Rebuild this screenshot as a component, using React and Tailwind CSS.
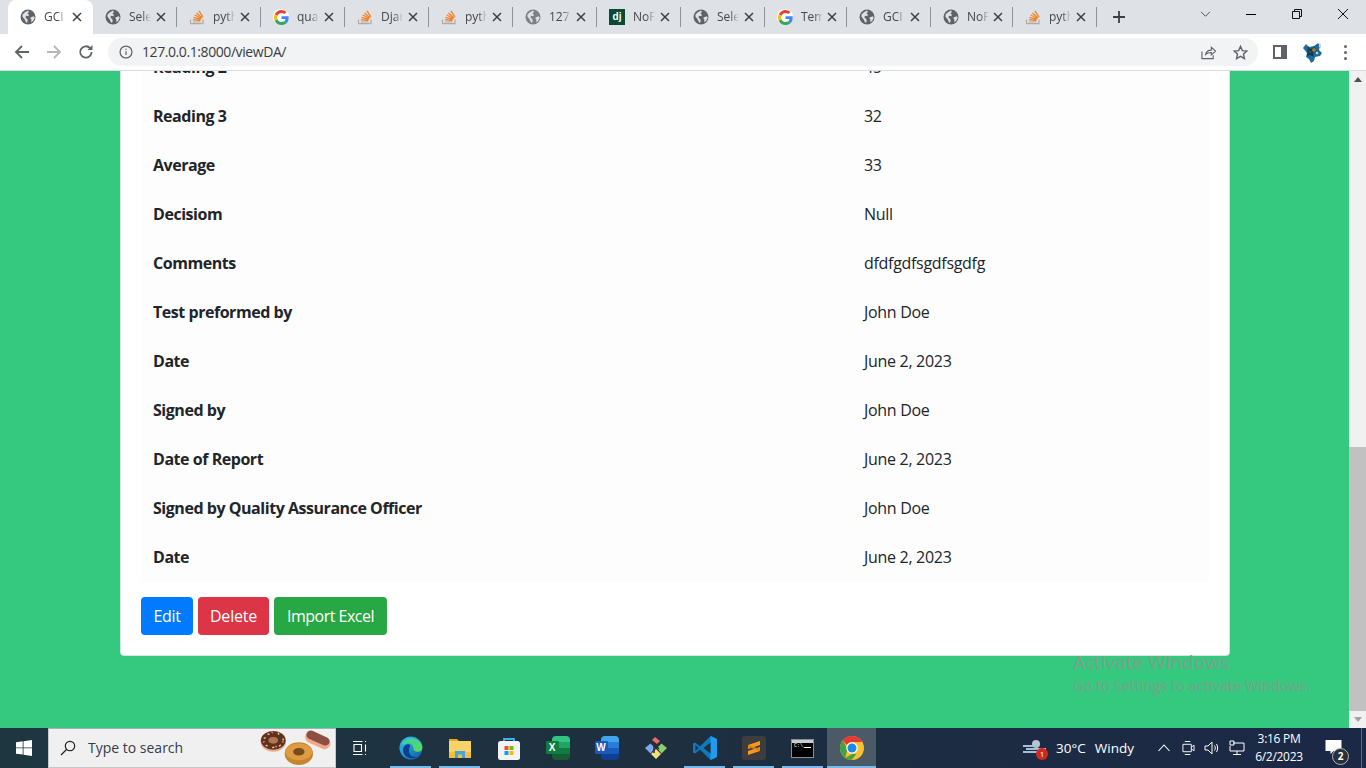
import React from "react";

const sans = "font-['Open_Sans','Noto_Sans',sans-serif]";

function Globe({ c = "#5f6368" }) {
  return (
    <svg viewBox="0 0 16 16" className="w-4 h-4 shrink-0">
      <circle cx="8" cy="8" r="7.5" fill={c} />
      <path d="M2.5 5.5 5 3.2l3-1.6 1 1.4-1.6 1.3 1.5 1.4-.6 1.6-2.4-.5-.4 1.7 2 2 .1 2.6-1.5.7-1.2-3-2.4-3z M11 8.2l2.9-.9.8 1.4-1.6 3.4-1.9 1.2.2-2.7-1.2-1.5z" fill="#dee1e6" />
    </svg>
  );
}

function SO() {
  return (
    <svg viewBox="0 0 16 16" className="w-4 h-4 shrink-0" fill="none">
      <path d="M1.5 10.5v4.2h12.5v-4.2" stroke="#b3a99e" strokeWidth="1.2" />
      <path d="M3.8 12.9h7.6" stroke="#bcbbbb" strokeWidth="1.3" />
      <path d="M3.9 10.7l7.5.8M4.5 8.4l7.3 2M5.7 6l6.6 3.5M7.5 3.9l5.6 5M9.9 1.9l4 6" stroke="#f48024" strokeWidth="1.3" />
    </svg>
  );
}

function G() {
  return (
    <span className="w-4 h-4 shrink-0 rounded-full bg-white flex items-center justify-center">
      <svg viewBox="0 0 48 48" className="w-[15px] h-[15px]">
        <path fill="#EA4335" d="M24 9.5c3.5 0 6.7 1.2 9.2 3.6l6.9-6.9C35.9 2.4 30.5 0 24 0 14.6 0 6.5 5.4 2.6 13.2l8 6.2C12.4 13.7 17.7 9.5 24 9.5z" />
        <path fill="#4285F4" d="M47 24.5c0-1.6-.1-3.1-.4-4.5H24v9h12.9c-.6 3-2.2 5.5-4.7 7.2l7.7 6C44.400 38 47 31.800 47 24.500z" />
        <path fill="#FBBC05" d="M10.500 28.600c-.5-1.400-.8-3-.8-4.600s.3-3.200.8-4.600l-8-6.200C.9 16.500 0 20.100 0 24s.9 7.500 2.600 10.800z" />
        <path fill="#34A853" d="M24 48c6.500 0 11.900-2.100 15.900-5.800l-7.700-6c-2.200 1.500-5 2.300-8.200 2.300-6.300 0-11.600-4.200-13.500-9.900l-8 6.200C6.500 42.600 14.600 48 24 48z" />
      </svg>
    </span>
  );
}

function Dj() {
  return (
    <span className="w-4 h-4 shrink-0 bg-[#0c4b33] text-white text-[10px] leading-4 font-bold text-center font-['Liberation_Sans',sans-serif]">dj</span>
  );
}

function ChromeLogo({ size = 24 }) {
  return (
    <svg viewBox="0 0 48 48" width={size} height={size}>
      <circle cx="24" cy="24" r="24" fill="#fbc02d" />
      <path d="M24 0a24 24 0 0 1 20.800 12H24a12 12 0 0 0-10.400 6L5.300 8.800A24 24 0 0 1 24 0z" fill="#e53935" />
      <path d="M5.300 8.800 15 26l-4.600 17.800A24 24 0 0 1 5.300 8.800zM10.400 43.800 24 36l9 0-10 12a24 24 0 0 1-12.600-4.200z" fill="#43a047" />
      <circle cx="24" cy="24" r="11.500" fill="#fff" />
      <circle cx="24" cy="24" r="9" fill="#1e88e5" />
    </svg>
  );
}

const tabs = [
  { t: "GCI", i: <Globe />, active: true },
  { t: "Sele", i: <Globe /> },
  { t: "pyth", i: <SO /> },
  { t: "qua", i: <G /> },
  { t: "Djar", i: <SO /> },
  { t: "pyth", i: <SO /> },
  { t: "127.", i: <Globe c="#7d8185" /> },
  { t: "NoF", i: <Dj /> },
  { t: "Sele", i: <Globe /> },
  { t: "Tem", i: <G />, narrow: true },
  { t: "GCI", i: <Globe /> },
  { t: "NoF", i: <Globe />, narrow: true },
  { t: "pyth", i: <SO /> },
];

function Close() {
  return (
    <svg viewBox="0 0 10 10" className="w-[10px] h-[10px] shrink-0" fill="none" stroke="#3c4043" strokeWidth="1.5">
      <path d="M1 1l8 8M9 1l-8 8" />
    </svg>
  );
}

function Tab({ t, i, active, noSep, narrow }) {
  const box = active
    ? "w-[85px] bg-white rounded-t-lg pl-3 pr-[11px]"
    : narrow
    ? "w-[82px] pl-3 pr-[10px]"
    : "w-[84px] pl-3 pr-[11px]";
  return (
    <div className={`relative h-[34px] flex items-center shrink-0 ${box}`}>
      {i}
      <span className="ml-2 w-[22px] overflow-hidden whitespace-nowrap text-xs text-[#45474a] [mask-image:linear-gradient(to_right,black_60%,transparent)]">{t}</span>
      <span className="ml-auto"><Close /></span>
      {!active && !noSep && <span className="absolute right-0 top-[7px] h-[20px] w-px bg-[#8f9296]" />}
    </div>
  );
}

function TabStrip() {
  return (
    <div className={`h-[34px] bg-[#dee1e6] flex items-end pl-2 ${sans}`}>
      {tabs.map((x, k) => <Tab key={k} {...x} noSep={k === 0} />)}
      <svg viewBox="0 0 12 12" className="w-3 h-3 ml-4 mb-[11px] shrink-0" fill="none" stroke="#3c4043" strokeWidth="1.800"><path d="M6 0v12M0 6h12" /></svg>
      <div className="ml-auto flex items-start h-full pt-2">
        <span className="w-[46px] flex justify-center"><svg viewBox="0 0 12 8" className="w-[11px] h-[7px] mt-[3px]" fill="none" stroke="#3c4043" strokeWidth="1"><path d="M1 1l5 5 5-5" /></svg></span>
        <span className="w-[46px] flex justify-center"><span className="w-[10px] h-px bg-black mt-[6px]" /></span>
        <span className="w-[46px] flex justify-center"><svg viewBox="0 0 10 10" className="w-[10px] h-[10px] mt-px" fill="none" stroke="#111" strokeWidth="1"><path d="M.5 2.500h7v7h-7zM2.500 2.500v-2h7v7h-2" /></svg></span>
        <span className="w-[46px] flex justify-center"><svg viewBox="0 0 10 10" className="w-[10px] h-[10px] mt-px" fill="none" stroke="#111" strokeWidth="1"><path d="M0 0l10 10M10 0L0 10" /></svg></span>
      </div>
    </div>
  );
}

function Toolbar() {
  return (
    <div className={`h-[37px] bg-white border-b border-[#dadce0] flex items-start pt-[4px] ${sans}`}>
      <div className="w-[108px] h-[28px] flex items-center shrink-0">
        <svg viewBox="0 0 16 16" className="w-4 h-4 ml-[14px]" fill="none" stroke="#5f6368" strokeWidth="1.800"><path d="M15 8H2M8 2 2 8l6 6" /></svg>
        <svg viewBox="0 0 16 16" className="w-4 h-4 ml-4" fill="none" stroke="#b4b6b9" strokeWidth="1.800"><path d="M1 8h13M8 2l6 6-6 6" /></svg>
        <svg viewBox="0 0 16 16" className="w-4 h-4 ml-4" fill="none" stroke="#5f6368" strokeWidth="1.800"><path d="M13.600 8a5.700 5.700 0 1 1-1.500-3.900" /><path d="M14.500 1v5h-5z" fill="#5f6368" stroke="none" /></svg>
      </div>
      <div className="w-[1150px] h-[28px] bg-[#f1f3f4] rounded-full flex items-center shrink-0">
        <svg viewBox="0 0 16 16" className="w-[14px] h-[14px] ml-[11px] shrink-0" fill="none" stroke="#5f6368" strokeWidth="1.400"><circle cx="8" cy="8" r="6.800" /><path d="M8 7v4.500M8 4.200v1.600" /></svg>
        <span className="ml-[9px] text-sm text-[#3a3d41] tracking-[-0.42px]">127.0.0.1:8000/viewDA/</span>
        <svg viewBox="0 0 16 16" className="w-[15px] h-[15px] ml-auto" fill="none" stroke="#5f6368" strokeWidth="1.200"><path d="M1 7v7.500h12V11" /><path d="M5 10c.5-3 3-4.600 6-4.600V2.500l4.500 4-4.500 4V8C8.500 8 6.500 8.500 5 10z" /></svg>
        <svg viewBox="0 0 16 16" className="w-[15px] h-[15px] ml-[17px] mr-[10px]" fill="none" stroke="#5f6368" strokeWidth="1.500"><path d="M8 1.500 10 6l4.700.5-3.500 3.200 1 4.800L8 12.100l-4.200 2.400 1-4.800L1.300 6.500 6 6z" /></svg>
      </div>
      <div className="flex items-center h-[28px] flex-1 min-w-0">
        <span className="ml-[15px] w-[14px] h-[14px] border-2 border-[#5f6368] border-r-[6px] shrink-0" />
        <svg viewBox="0 0 22 22" className="w-[22px] h-[22px] ml-[15px] shrink-0">
          <path d="M1 7l3-4 3 3 5-1 4-3 2 3-1 4 3 3-2 3-5 1-1 4-3 2-2-4-3-2 1-4z" fill="#1f6d9c" />
          <path d="M6 5l2 3 5-2 2 4-4 2 1 4-4-2-3 1z" fill="#0c3c5c" />
          <circle cx="12" cy="9" r="2" fill="#a8772e" /><circle cx="8" cy="11" r="1.500" fill="#5b4a1f" /><circle cx="15" cy="12" r="1.200" fill="#d0d4d6" /><path d="M17 2l2 1 0 4-2-1z" fill="#cfd3d5" />
        </svg>
        <span className="ml-[20px] flex flex-col gap-[3px] shrink-0">
          <i className="w-[3px] h-[3px] rounded-full bg-[#5f6368]" /><i className="w-[3px] h-[3px] rounded-full bg-[#5f6368]" /><i className="w-[3px] h-[3px] rounded-full bg-[#5f6368]" />
        </span>
      </div>
    </div>
  );
}

const rows = [
  ["Reading 2", "45"],
  ["Reading 3", "32"],
  ["Average", "33"],
  ["Decisiom", "Null"],
  ["Comments", "dfdfgdfsgdfsgdfg"],
  ["Test preformed by", "John Doe"],
  ["Date", "June 2, 2023"],
  ["Signed by", "John Doe"],
  ["Date of Report", "June 2, 2023"],
  ["Signed by Quality Assurance Officer", "John Doe"],
  ["Date", "June 2, 2023"],
];

function Page() {
  return (
    <div className={`relative flex-1 min-h-0 flex bg-[#34c97e] overflow-hidden ${sans}`}>
      <div className="flex-1 min-w-0 pl-[120px]">
        <div className="-mt-[29px] w-[1110px] h-[614px] bg-white rounded border border-[#d9e4de] px-5 text-[#212529]">
          <table className="w-[1068px] border-collapse text-base">
            <tbody>
              {rows.map(([a, b], k) => (
                <tr key={k} className="h-[49px] bg-[#fdfdfd]">
                  <th className="w-[711px] px-3 pb-[2px] text-left font-bold tracking-[-0.46px]">{a}</th>
                  <td className="px-3 pb-[2px] tracking-[-0.3px]">{b}</td>
                </tr>
              ))}
            </tbody>
          </table>
          <div className="flex gap-[5px] mt-[15px] text-white">
            <button className="h-[38px] w-[52px] rounded bg-[#007bff] tracking-[-0.3px]">Edit</button>
            <button className="h-[38px] w-[71px] rounded bg-[#dc3545] tracking-[-0.2px]">Delete</button>
            <button className="h-[38px] w-[113px] rounded bg-[#28a745] tracking-[-0.5px] whitespace-nowrap">Import Excel</button>
          </div>
        </div>
      </div>
      <div className="w-[17px] bg-[#f1f1f1] flex flex-col items-center shrink-0">
        <div className="h-[17px] flex items-center justify-center"><span className="w-0 h-0 border-x-[4px] border-x-transparent border-b-[5px] border-b-[#505050]" /></div>
        <div className="flex-1" />
        <div className="w-full h-[264px] bg-[#c1c1c1]" />
        <div className="h-[17px] flex items-center justify-center"><span className="w-0 h-0 border-x-[4px] border-x-transparent border-t-[5px] border-t-[#a3a3a3]" /></div>
      </div>
      <div className="absolute left-[1073px] top-[579px] text-[#7a9f8d] pointer-events-none whitespace-nowrap">
        <div className="text-[19px] leading-6">Activate Windows</div>
        <div className="text-[14.500px] leading-5 mt-[2px]">Go to Settings to activate Windows.</div>
      </div>
    </div>
  );
}

const Edge = () => (
  <svg viewBox="0 0 24 24" className="w-6 h-6">
    <defs>
      <linearGradient id="e1" x1="0" y1="0" x2="1" y2="1"><stop offset="0" stopColor="#35c1f1" /><stop offset="1" stopColor="#0c59a4" /></linearGradient>
      <linearGradient id="e2" x1="0" y1="0" x2="1" y2="1"><stop offset="0" stopColor="#35d0b0" /><stop offset="1" stopColor="#5fd84f" /></linearGradient>
    </defs>
    <circle cx="12" cy="12" r="11.500" fill="url(#e1)" />
    <path d="M3 8C6 1 18 0 22.500 8c1.500 3 1 7-2 7.500-3 .5-6 0-6-2.500 0-4-3-6-6-5.500S3.500 9.500 3 8z" fill="url(#e2)" />
    <path d="M8 8.500c-4 1-5 6-2.500 10 2.500 4 9 5 12.500 2.500-5 1-8.500-3-8-7 .2-2 1-3.500 1-5-.7-.8-2-.8-3-.5z" fill="#0d3f8e" />
  </svg>
);
const Folder = () => (
  <svg viewBox="0 0 22 20" className="w-[22px] h-5">
    <path d="M0 1h8l2 2v4H0z" fill="#e6a823" />
    <path d="M0 3h22v17H0z" fill="#f8d468" />
    <path d="M0 14h22v6H0z" fill="#f0bf3e" />
    <path d="M6 13h10v7h-3v-3.500H9V20H6z" fill="#4aa3e0" />
  </svg>
);
const Store = () => (
  <svg viewBox="0 0 24 24" className="w-6 h-6">
    <path d="M7 7V3h10v4" fill="none" stroke="#3cb4ea" strokeWidth="1.800" />
    <rect x="1" y="5" width="22" height="19" rx="2.500" fill="#f3f3f3" />
    <rect x="7.500" y="10" width="4" height="4" fill="#f25022" /><rect x="12.500" y="10" width="4" height="4" fill="#7fba00" />
    <rect x="7.500" y="15" width="4" height="4" fill="#00a4ef" /><rect x="12.500" y="15" width="4" height="4" fill="#ffb900" />
  </svg>
);
const Excel = () => (
  <div className="relative w-6 h-6">
    <div className="absolute left-[6px] top-0 w-[18px] h-6 rounded-sm flex flex-col overflow-hidden">
      <i className="flex-1 bg-[#33c481]" /><i className="flex-1 bg-[#21a366]" /><i className="flex-1 bg-[#107c41]" /><i className="flex-1 bg-[#185c37]" />
    </div>
    <span className="absolute left-0 top-[5px] w-[13px] h-[13px] bg-[#107c41] text-white text-[10px] leading-[13px] text-center font-bold rounded-[1px] font-['Liberation_Sans',sans-serif]">X</span>
  </div>
);
const Word = () => (
  <div className="relative w-6 h-6">
    <div className="absolute left-[6px] top-0 w-[18px] h-6 rounded-sm flex flex-col overflow-hidden">
      <i className="flex-1 bg-[#41a5ee]" /><i className="flex-1 bg-[#2b7cd3]" /><i className="flex-1 bg-[#185abd]" /><i className="flex-1 bg-[#103f91]" />
    </div>
    <span className="absolute left-0 top-[5px] w-[13px] h-[13px] bg-[#185abd] text-white text-[10px] leading-[13px] text-center font-bold rounded-[1px] font-['Liberation_Sans',sans-serif]">W</span>
  </div>
);
const Git = () => (
  <svg viewBox="0 0 24 24" className="w-6 h-6">
    <path d="M11 12 6.500 7.500 1 12l5.500 5.500z" fill="#7fa8f0" />
    <path d="M13 12l4.500-4.500L23 12l-5.500 5.500z" fill="#8ccf66" />
    <path d="M12 13l-5 5 5 5 5-5z" fill="#f5e17a" />
    <path d="M8 4l3-3 5 4-3 3z" fill="#e96a6a" />
    <path d="M10 6v11M10 8l5 5" stroke="#3a2a2a" strokeWidth="1.500" fill="none" />
  </svg>
);
const VSCode = () => (
  <svg viewBox="0 0 24 24" className="w-6 h-6">
    <path d="M17.500 0 24 3v18l-6.500 3L7 13.500 2 17.500 0 16.500V7.500l2-1 5 4z" fill="#0d7bc0" />
    <path d="M17.500 0 24 3v18l-6.500 3z" fill="#1f9cf0" />
    <path d="M17.500 6.500 10.500 12l7 5.500z" fill="#1f2f3c" />
    <path d="M2.500 9 5.500 12l-3 3z" fill="#1f2f3c" />
  </svg>
);
const Sublime = () => (
  <div className="w-6 h-6 rounded-[3px] bg-[#3d3d3d] flex items-center justify-center">
    <svg viewBox="0 0 14 16" className="w-[14px] h-4"><path d="M13 1v4L1 9V5zM13 7v4L1 15v-4z" fill="#f89820" /><path d="M1 5l12 4v2L1 7z" fill="#d97f0e" /></svg>
  </div>
);
const Cmd = () => (
  <div className="w-[23px] h-[19px] bg-black border border-[#8b8f92] relative">
    <i className="absolute inset-x-0 top-0 h-[3px] bg-[#c9cdd0]" />
    <span className="absolute left-[2px] top-[4px] text-[5px] leading-[5px] text-white font-['Liberation_Mono',monospace]">C:\_</span>
    <i className="absolute left-[12px] top-[7px] w-[7px] h-px bg-white" />
  </div>
);

const apps = [
  { c: <Edge />, on: true },
  { c: <Folder />, on: true },
  { c: <Store /> },
  { c: <Excel /> },
  { c: <Word /> },
  { c: <Git /> },
  { c: <VSCode />, on: true },
  { c: <Sublime />, on: true },
  { c: <Cmd />, on: true },
  { c: <ChromeLogo />, on: true, cur: true },
];

function Donuts() {
  return (
    <svg viewBox="0 0 76 38" className="w-[72px] h-[36px] absolute right-[3px] top-0">
      <ellipse cx="14" cy="13" rx="13.500" ry="11" fill="#f1a78a" />
      <ellipse cx="14" cy="12" rx="13" ry="10" fill="#5b3326" />
      <ellipse cx="14" cy="12" rx="5" ry="3.500" fill="#b5764e" />
      <path d="M4 10l2-1M8 5l2 1M19 4l1 2M24 10l1 2M22 17l-2 1M6 17l2 1M13 20l2-1" stroke="#f5d24a" strokeWidth="1.500" />
      <path d="M3 14l2-1M12 3l2 1M25 14l-2-1M16 18l2 1" stroke="#ef6c6c" strokeWidth="1.500" />
      <ellipse cx="41" cy="26" rx="15" ry="12" fill="#c8842f" />
      <ellipse cx="41" cy="24" rx="14" ry="9" fill="#dd9c44" />
      <ellipse cx="41" cy="24" rx="6" ry="4" fill="#7a4a1b" />
      <rect x="47" y="6" width="28" height="12" rx="6" transform="rotate(24 61 12)" fill="#f1a78a" />
      <rect x="48" y="5" width="26" height="9" rx="4.500" transform="rotate(24 61 10)" fill="#8d5040" />
    </svg>
  );
}

function Taskbar() {
  return (
    <div className={`h-10 shrink-0 flex bg-gradient-to-r from-[#1d3640] via-[#1e2f40] to-[#1b2846] text-white ${sans}`}>
      <div className="w-12 flex items-center justify-center shrink-0">
        <svg viewBox="0 0 16 16" className="w-4 h-4" fill="#fff"><path d="M0 2.300 6.700 1.300v6.200H0zM7.500 1.200 16 0v7.500H7.500zM0 8.300h6.700v6.300L0 13.700zM7.500 8.300H16V16l-8.500-1.200z" /></svg>
      </div>
      <div className="relative w-[288px] h-10 bg-[#f0f0f0] border-x border-y border-[#c8c8c8] border-t-[#9fb0b8] flex items-center shrink-0">
        <svg viewBox="0 0 16 16" className="w-4 h-4 ml-[11px]" fill="none" stroke="#222" strokeWidth="1.200"><circle cx="10" cy="6" r="4.700" /><path d="M6.500 9.500 1 15" /></svg>
        <span className="ml-[12px] text-sm text-[#333c48]">Type to search</span>
        <Donuts />
      </div>
      <div className="w-[48px] flex items-center justify-center shrink-0">
        <svg viewBox="0 0 16 16" className="w-4 h-4" fill="none" stroke="#fff" strokeWidth="1.100"><path d="M1 1.500h9.500M1 14.500h9.500M2 4.500h7.500v7H2zM13.500 1v1M13.500 4.500v7M13.500 14v1" /></svg>
      </div>
      <div className="flex shrink-0 ml-[2px]">
        {apps.map((a, k) => (
          <div key={k} className={`relative w-[49px] h-10 flex items-center justify-center ${a.cur ? "bg-[#4b5a66]" : ""}`}>
            {a.c}
            {a.on && <i className={`absolute bottom-0 h-[2px] bg-[#76b9ed] ${a.cur ? "inset-x-0" : "inset-x-1"}`} />}
          </div>
        ))}
      </div>
      <div className="flex-1" />
      <div className="flex items-center shrink-0 text-[13.500px]">
        <div className="relative w-[24px] h-[20px] mr-[9px]">
          <svg viewBox="0 0 24 20" className="w-6 h-5" fill="none"><circle cx="13" cy="6" r="4" fill="#b8c4d4" /><path d="M0 8h14M3 11h20M0 14h15" stroke="#a9bdd6" strokeWidth="2" /></svg>
          <span className="absolute -right-[1px] bottom-[-2px] w-[12px] h-[12px] rounded-full bg-[#d1281f] text-[8px] leading-3 text-center">1</span>
        </div>
        <span>30°C</span>
        <span className="ml-[9px]">Windy</span>
        <svg viewBox="0 0 12 8" className="w-3 h-2 ml-[24px]" fill="none" stroke="#fff" strokeWidth="1.100"><path d="M.5 7 6 1l5.500 6" /></svg>
        <svg viewBox="0 0 14 16" className="w-[13px] h-4 ml-[12px]" fill="none" stroke="#fff" strokeWidth="1"><path d="M3 1h6M3 15h6M1 4v8h9V4zM10 7l3-2v6l-3-2" /></svg>
        <svg viewBox="0 0 16 16" className="w-4 h-4 ml-[9px]" fill="none" stroke="#fff" strokeWidth="1"><path d="M1 6h3l4-4v12l-4-4H1zM10.500 5.500c1 1.500 1 3.500 0 5M12.500 4c1.500 2.500 1.500 5.500 0 8" /></svg>
        <svg viewBox="0 0 16 16" className="w-4 h-4 ml-[9px]" fill="none" stroke="#fff" strokeWidth="1"><path d="M4 3h11v8H1V6M8 11v3M4 14.500h8M1 1h4v4H1z" /></svg>
        <div className="w-[70px] -ml-[1px] flex flex-col items-center text-xs leading-[18px] tracking-[-0.3px]">
          <span>3:16 PM</span>
          <span>6/2/2023</span>
        </div>
        <div className="relative w-[38px] h-10 flex items-center justify-center">
          <svg viewBox="0 0 16 14" className="w-[17px] h-[14px] mb-[3px]" fill="#fff"><path d="M0 0h16v11H8l-3 3v-3H0z" /></svg>
          <span className="absolute left-[18px] top-[20px] w-[17px] h-[17px] rounded-full bg-[#2a2f3a] border border-[#aeb4bc] text-[10px] leading-[15px] text-center font-bold">2</span>
        </div>
        <i className="w-px h-10 bg-[#5a6a80] ml-[9px] mr-[4px]" />
      </div>
    </div>
  );
}

export default function App() {
  return (
    <div className="w-[1366px] h-screen flex flex-col overflow-hidden">
      <TabStrip />
      <Toolbar />
      <Page />
      <Taskbar />
    </div>
  );
}
